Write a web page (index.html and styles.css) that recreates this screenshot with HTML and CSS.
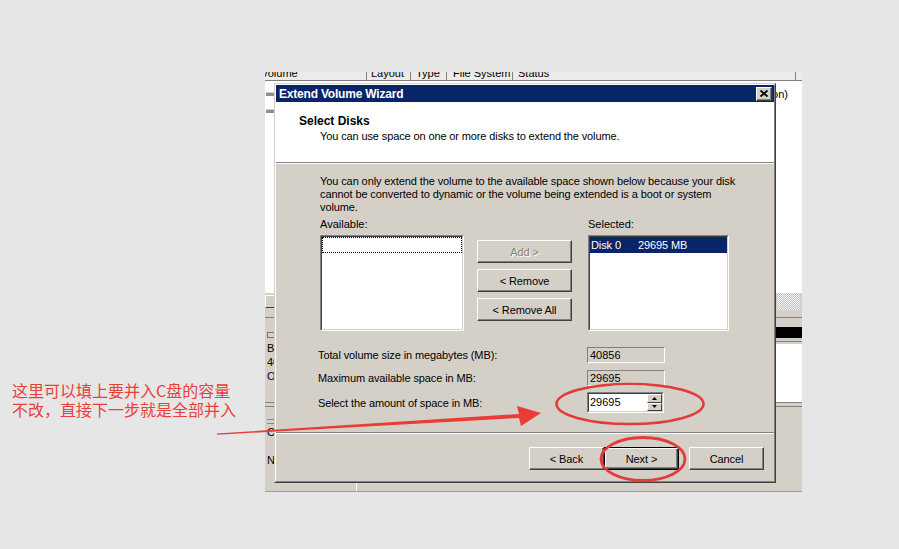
FILE: index.html
```html
<!DOCTYPE html>
<html>
<head>
<meta charset="utf-8">
<title>Extend Volume Wizard</title>
<link rel="stylesheet" href="styles.css">
</head>
<body>
<div class="desk">
  <div class="bgwin">
    <div class="colhdr">
      <div class="hc hc1">Volume</div>
      <div class="hc hc2">Layout</div>
      <div class="hc hc3">Type</div>
      <div class="hc hc4">File System</div>
      <div class="hc hc5">Status</div>
      <div class="hc hc6"></div>
    </div>
    <div class="upper">
      <div class="vrow"><i class="drv"></i><span class="vtxt">Healthy (System Partition)</span></div>
      <div class="vrow"><i class="drv"></i></div>
    </div>
    <div class="scrollrow"><div class="sbtn"></div><div class="hatch"></div></div>
    <div class="splitter"></div>
    <div class="lower">
      <div class="disk">
        <div class="dlabel">
          <div class="dl"><i class="dicon"></i></div>
          <div class="dl">Basic</div>
          <div class="dl">40.00 GB</div>
          <div class="dl">Online</div>
        </div>
        <div class="dmap"><div class="dbar"></div><div class="dgap"></div><div class="dwhite"></div></div>
      </div>
      <div class="dsep"></div>
      <div class="disk cd">
        <div class="dlabel">
          <div class="dl"><i class="cdicon"></i></div>
          <div class="dl">CD-ROM 0</div>
          <div class="dl nm">No Media</div>
        </div>
        <div class="dmap"></div>
      </div>
    </div>

    <div class="dialog">
      <div class="dlg-in">
        <div class="titlebar">
          <span class="title">Extend Volume Wizard</span>
          <div class="xbtn"><svg width="8" height="7" viewBox="0 0 8 7"><path d="M0.5 0.5 L7.5 6.5 M7.5 0.5 L0.5 6.5" stroke="#000" stroke-width="1.8" fill="none"/></svg></div>
        </div>
        <div class="wiz-head">
          <div class="wh-title">Select Disks</div>
          <div class="wh-sub">You can use space on one or more disks to extend the volume.</div>
        </div>
        <div class="etch"></div>
        <div class="wiz-body">
          <p class="intro">You can only extend the volume to the available space shown below because your disk<br>cannot be converted to dynamic or the volume being extended is a boot or system<br>volume.</p>
          <div class="pick">
            <div class="lbl">Available:</div>
            <div></div>
            <div class="lbl">Selected:</div>
            <div class="lb"><div class="lb-in"><div class="item focus"></div></div></div>
            <div class="mid">
              <div class="btn dis">Add &gt;</div>
              <div class="btn">&lt; Remove</div>
              <div class="btn">&lt; Remove All</div>
            </div>
            <div class="lb"><div class="lb-in"><div class="item sel"><span class="c1">Disk 0</span><span>29695 MB</span></div></div></div>
          </div>
          <div class="fields">
            <div class="frow"><span class="flbl">Total volume size in megabytes (MB):</span><span class="ro">40856</span></div>
            <div class="frow"><span class="flbl">Maximum available space in MB:</span><span class="ro">29695</span></div>
            <div class="frow spinrow"><span class="flbl">Select the amount of space in MB:</span>
              <div class="spin"><div class="spin-in"><span class="sv">29695</span>
                <div class="sbtns">
                  <div class="sb"><svg width="5" height="3" viewBox="0 0 5 3"><polygon points="2.5,0 5,3 0,3" fill="#000"/></svg></div>
                  <div class="sb"><svg width="5" height="3" viewBox="0 0 5 3"><polygon points="0,0 5,0 2.5,3" fill="#000"/></svg></div>
                </div>
              </div></div>
            </div>
          </div>
        </div>
        <div class="etch"></div>
        <div class="wiz-foot">
          <div class="btn fb">&lt; Back</div>
          <div class="btn fb def">Next &gt;</div>
          <div class="btn fb cancel">Cancel</div>
        </div>
      </div>
    </div>
  </div>

  <div class="note"><div class="nl">这里可以填上要并入C盘的容量</div><div class="nl">不改，直接下一步就是全部并入</div></div>
  <svg class="marks" width="899" height="549" viewBox="0 0 899 549">
    <ellipse cx="630" cy="404" rx="73.5" ry="20" fill="none" stroke="#e23c3a" stroke-width="2.6"/>
    <ellipse cx="643" cy="459" rx="42" ry="21.5" fill="none" stroke="#e23c3a" stroke-width="2.8"/>
    <polygon points="217,433.5 519,414 517,406 541,413 521,426 519,418 217,434.7" fill="#ea3b36"/>
  </svg>
</div>
</body>
</html>
```

FILE: styles.css
```css
* { box-sizing: border-box; }
html, body { margin: 0; }
body { background: #e6e6e6; overflow: hidden; }

.desk {
  position: relative;
  width: 899px;
  height: 549px;
  padding: 72px 0 0 265px;
  font-family: "Liberation Sans", Arial, sans-serif;
  font-size: 11px;
  color: #000;
}

/* background Disk Management window */
.bgwin {
  position: relative;
  width: 537px;
  height: 420px;
  background: #d4d0c8;
  display: flex;
  flex-direction: column;
}
.colhdr {
  height: 9px;
  flex: none;
  display: flex;
  background: #ecebe7;
  border-bottom: 1px solid #808080;
  overflow: hidden;
}
.hc {
  flex: none;
  height: 16px;
  margin-top: -5px;
  line-height: 13px;
  white-space: nowrap;
  border-left: 1px solid #808080;
  padding-left: 5px;
}
.hc1 { width: 101px; border-left: 0; padding-left: 0; text-indent: -4px; }
.hc2 { width: 44px; padding-left: 4px; }
.hc3 { width: 36px; }
.hc4 { width: 66px; padding-left: 6px; }
.hc5 { width: 283px; }
.hc6 { flex: 1; }

.upper { height: 212px; flex: none; background: #fff; padding-top: 4px; }
.vrow { height: 17px; display: flex; align-items: center; }
.drv {
  flex: none;
  width: 8px;
  height: 4px;
  margin-left: 1px;
  background: #8e8e8e;
  border-top: 1px solid #d0d0d0;
}
.vtxt { margin-left: auto; padding-right: 14px; white-space: nowrap; }

.scrollrow { height: 17px; flex: none; display: flex; align-items: flex-start; }
.sbtn {
  width: 10px;
  height: 13px;
  margin-top: 2px;
  background: #d4d0c8;
  border: 1px solid;
  border-color: #fff #404040 #404040 #fff;
}
.hatch {
  width: 23px;
  height: 17px;
  margin-left: auto;
  margin-right: 2px;
  background: repeating-conic-gradient(#c4c4c4 0 25%, #f2f2f2 0 50%) 0 0 / 2px 2px;
}
.splitter { height: 8px; flex: none; border-bottom: 1px solid #808080; }

.lower { flex: 1; display: flex; flex-direction: column; border-bottom: 1px solid #9c9c9c; }
.disk { display: grid; grid-template-columns: 92px 1fr; height: 84px; flex: none; }
.disk.cd { flex: 1; height: auto; }
.dlabel { padding: 9px 0 0 2px; }
.dl { height: 14px; line-height: 14px; white-space: nowrap; }
.dicon {
  display: inline-block;
  width: 7px;
  height: 6px;
  border: 1px solid #777;
  border-right: 0;
  vertical-align: middle;
}
.cd .dlabel { padding-top: 7px; border-right: 1px solid #fff; }
.cd .dl { height: 12px; line-height: 12px; }
.cd .nm { margin-top: 16px; }
.cdicon {
  display: inline-block;
  width: 7px;
  height: 5px;
  border-top: 1px solid #888;
  border-bottom: 1px solid #888;
  vertical-align: middle;
}
.dmap { padding-top: 9px; }
.dbar { height: 11px; background: #000; }
.dgap { height: 6px; border-top: 3px solid #d4d0c8; border-bottom: 2px solid #d4d0c8; background: #808080; }
.dwhite { height: 58px; background: #fff; }
.dsep { height: 5px; flex: none; border-top: 1px solid #808080; border-bottom: 1px solid #808080; }

/* wizard dialog */
.dialog {
  position: absolute;
  left: 9px;
  top: 11px;
  width: 502px;
  height: 400px;
  border: 1px solid;
  border-color: #d4d0c8 #404040 #404040 #d4d0c8;
  background: #d4d0c8;
}
.dlg-in {
  height: 100%;
  border: 1px solid;
  border-color: #fff #808080 #808080 #fff;
  display: flex;
  flex-direction: column;
}
.titlebar {
  height: 17px;
  flex: none;
  background: #0a246a;
  display: flex;
  align-items: center;
  padding: 0 2px 0 3px;
}
.title {
  color: #fff;
  font-weight: bold;
  font-size: 12px;
  letter-spacing: -0.2px;
  white-space: nowrap;
}
.xbtn {
  margin-left: auto;
  width: 16px;
  height: 14px;
  background: #d4d0c8;
  border: 1px solid;
  border-color: #fff #404040 #404040 #fff;
  box-shadow: inset -1px -1px #808080;
  display: flex;
  align-items: center;
  justify-content: center;
  padding: 0 1px 1px 0;
}
.xbtn svg { display: block; }

.wiz-head { height: 60px; flex: none; background: #fff; padding: 12px 0 0 23px; }
.wh-title { font-weight: bold; font-size: 12px; line-height: 14px; }
.wh-sub { margin-top: 2px; padding-left: 21px; line-height: 13px; letter-spacing: -0.12px; white-space: nowrap; }
.etch { height: 2px; flex: none; border-top: 1px solid #808080; border-bottom: 1px solid #fff; }

.wiz-body { height: 268px; flex: none; padding: 11px 0 0 44px; }
.intro { margin: 0; line-height: 13px; white-space: nowrap; letter-spacing: -0.1px; }
.pick {
  margin-top: 4px;
  display: grid;
  grid-template-columns: 144px 95px 144px;
  grid-template-rows: 13px 96px;
  column-gap: 13px;
  row-gap: 4px;
}
.pick > :nth-child(3), .pick > :nth-child(6) { margin-left: 3px; }
.lbl { line-height: 13px; }
.lb {
  border: 1px solid;
  border-color: #808080 #fff #fff #808080;
  height: 96px;
}
.lb-in {
  height: 100%;
  border: 1px solid;
  border-color: #404040 #d4d0c8 #d4d0c8 #404040;
  background: #fff;
}
.item { height: 16px; line-height: 16px; white-space: nowrap; }
.item.focus { border: 1px dotted #000; }
.item.sel { background: #0a246a; color: #fff; padding-left: 1px; letter-spacing: -0.1px; }
.c1 { display: inline-block; width: 47px; }

.mid { padding-top: 5px; display: flex; flex-direction: column; gap: 6px; }
.btn {
  height: 23px;
  background: #d4d0c8;
  border: 1px solid;
  border-color: #fff #404040 #404040 #fff;
  box-shadow: inset -1px -1px #808080;
  display: flex;
  align-items: center;
  justify-content: center;
  white-space: nowrap;
  letter-spacing: -0.1px;
}
.btn.dis { color: #808080; text-shadow: 1px 1px 0 #fff; }

.fields { margin: 16px 0 0 -2px; }
.frow { display: flex; align-items: center; height: 16px; }
.frow + .frow { margin-top: 7px; }
.frow.spinrow { height: 21px; margin-top: 6px; }
.flbl { width: 269px; flex: none; white-space: nowrap; letter-spacing: -0.1px; }
.ro {
  width: 78px;
  height: 16px;
  border: 1px solid;
  border-color: #808080 #fff #fff #808080;
  padding-left: 2px;
  line-height: 14px;
  background: #d4d0c8;
}
.spin {
  width: 77px;
  height: 21px;
  border: 1px solid;
  border-color: #808080 #fff #fff #808080;
}
.spin-in {
  height: 100%;
  border: 1px solid;
  border-color: #404040 #d4d0c8 #d4d0c8 #404040;
  background: #fff;
  display: flex;
}
.sv { flex: 1; padding-left: 1px; line-height: 17px; }
.sbtns { width: 15px; display: flex; flex-direction: column; }
.sb {
  flex: 1;
  background: #d4d0c8;
  border: 1px solid;
  border-color: #fff #404040 #404040 #fff;
  display: flex;
  align-items: center;
  justify-content: center;
}
.sb svg { display: block; }

.wiz-foot {
  flex: 1;
  display: flex;
  justify-content: flex-end;
  align-items: flex-start;
  padding: 13px 10px 0 0;
}
.fb { width: 75px; }
.fb.def {
  border: 1px solid #000;
  box-shadow: inset 1px 1px #fff, inset -1px -1px #404040, inset -2px -2px #808080;
}
.fb.cancel { margin-left: 10px; }

/* annotation overlay */
.note {
  position: absolute;
  left: 12px;
  top: 381px;
  font-family: "Noto Sans CJK SC", sans-serif;
  font-size: 16px;
  color: #e8403b;
  white-space: nowrap;
}
.nl { height: 19px; line-height: 19px; }
.marks { position: absolute; left: 0; top: 0; pointer-events: none; }
```
